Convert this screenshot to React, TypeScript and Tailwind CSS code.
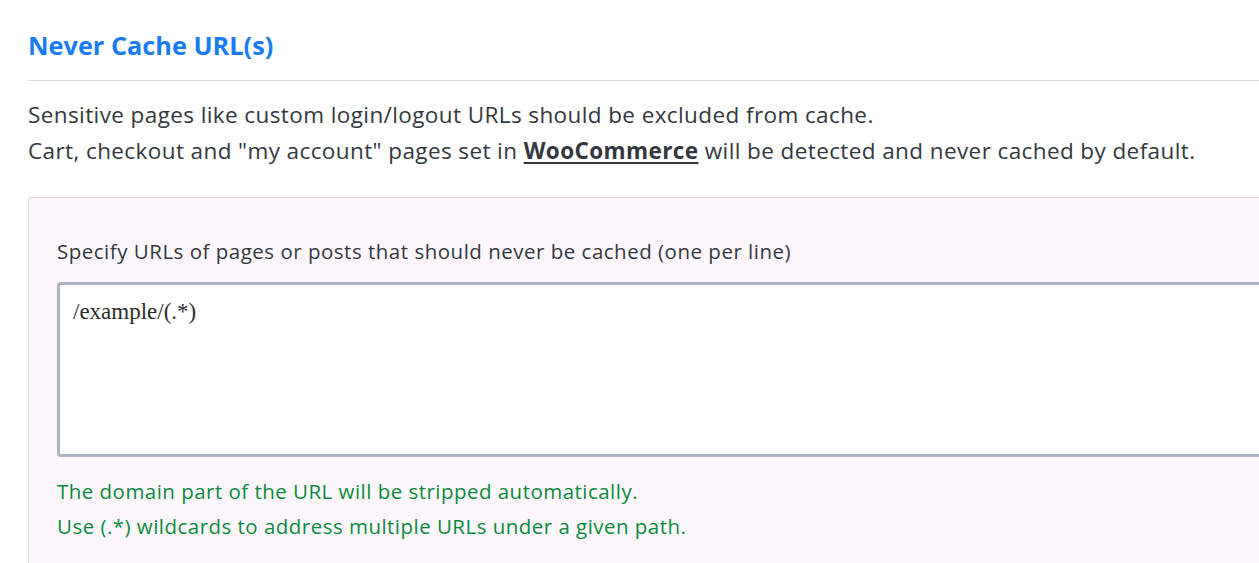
const sans = "font-['Open_Sans','Noto_Sans',sans-serif]";

export default function App() {
  return (
    <div className={`h-[563px] w-full overflow-hidden bg-white pl-[28px] text-[#333840] ${sans}`}>
      <div className="w-[1300px]">
        {/* Section heading */}
        <h2 className="pt-[28px] text-[25.3px] leading-[34px] font-bold text-[#1a7cf2]">Never Cache URL(s)</h2>
        <hr className="mt-[18px] border-t border-[#dcdce0]" />

        <p className="mt-[16px] text-[22.5px] leading-[36px] tracking-[0.4px]">
          Sensitive pages like custom login/logout URLs should be excluded from cache.
          <br />
          Cart, checkout and "my account" pages set in{" "}
          <a href="#" className="font-bold underline underline-offset-[3px] decoration-2 text-[#333840]">
            WooCommerce
          </a>{" "}
          will be detected and never cached by default.
        </p>

        {/* Settings card */}
        <div className="mt-[28px] rounded-tl-[4px] border-t border-l border-[#e2dfe2] bg-[#fdf7fd] pt-[38px] pb-[40px] pl-[28px]">
          <label className="block text-[20.5px] leading-[30px] tracking-[0.5px]">
            Specify URLs of pages or posts that should never be cached (one per line)
          </label>
          <textarea
            defaultValue="/example/(.*)"
            className="mt-[16px] block h-[175px] w-full resize-none rounded-[4px] border-[3px] border-[#aeb2c4] bg-white px-[13px] py-[12px] font-['Liberation_Serif',serif] text-[23px] leading-[30px] text-[#2c2c2c] outline-none"
          />
          <div className="mt-[17px] text-[20.5px] leading-[35px] tracking-[0.47px] text-[#0a8a3c]">
            <p>The domain part of the URL will be stripped automatically.</p>
            <p>Use (.*) wildcards to address multiple URLs under a given path.</p>
          </div>
        </div>
      </div>
    </div>
  );
}
